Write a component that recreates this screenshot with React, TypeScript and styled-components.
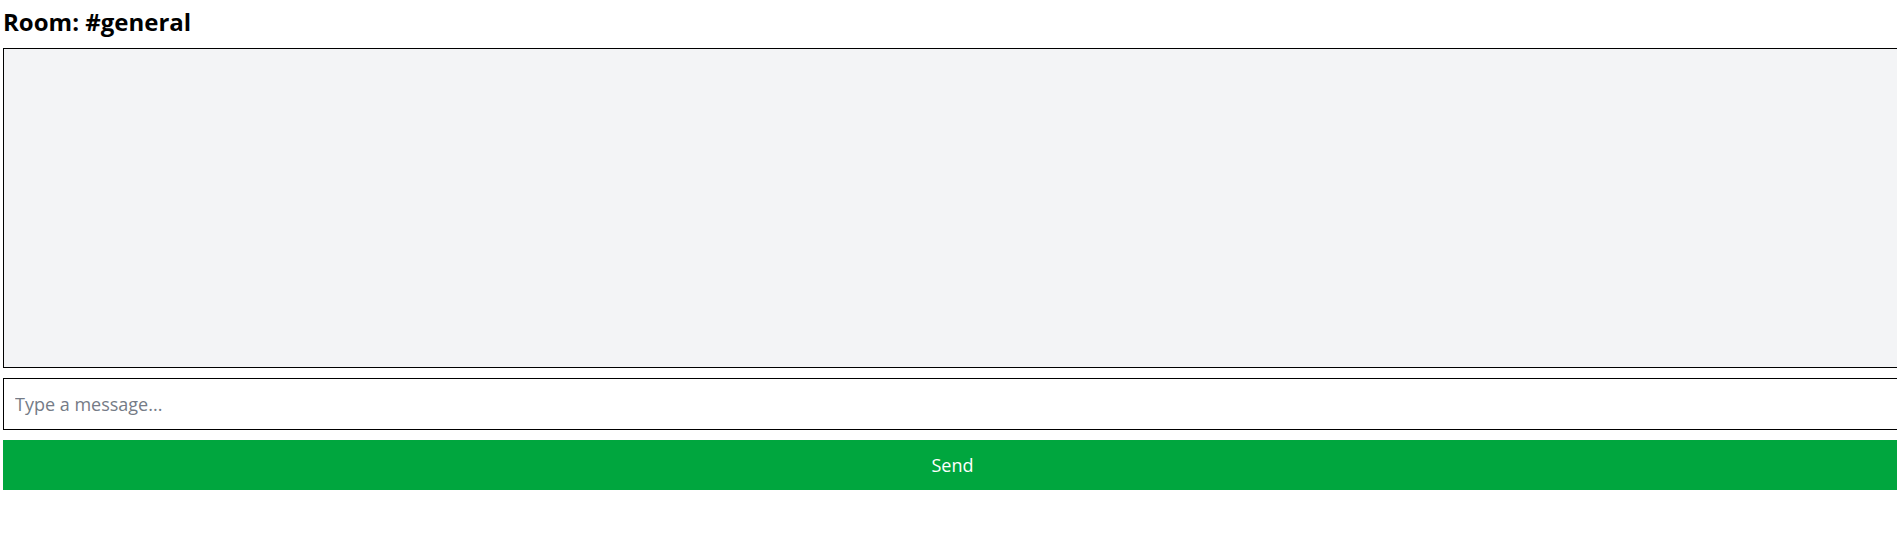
import React from "react";
import styled, { createGlobalStyle } from "styled-components";

const GlobalStyle = createGlobalStyle`
  html, body {
    margin: 0;
    padding: 0;
    overflow: hidden;
    background: #ffffff;
    font-family: "Open Sans", "Noto Sans", "Liberation Sans", sans-serif;
  }
  * { box-sizing: border-box; }
`;

const Page = styled.div`
  display: flex;
  flex-direction: column;
  width: 1902px;
  padding: 6px 0 0 3px;
`;

const Title = styled.h2`
  margin: 0 0 10px 0;
  font-size: 24px;
  line-height: 32px;
  font-weight: 700;
  color: #000;
`;

const Messages = styled.div`
  height: 320px;
  border: 1px solid #000;
  background: #f3f4f6;
  overflow-y: auto;
`;

const Input = styled.input`
  margin-top: 10px;
  height: 52px;
  border: 1px solid #000;
  padding: 0 11px;
  font-family: inherit;
  font-size: 18px;
  color: #111;
  background: #fff;
  outline: none;
  &::placeholder {
    color: #757b86;
  }
`;

const SendButton = styled.button`
  margin-top: 10px;
  height: 50px;
  border: none;
  background: #00a63e;
  color: #ffffff;
  font-family: inherit;
  font-size: 18px;
  cursor: pointer;
`;

export default function App() {
  return (
    <>
      <GlobalStyle />
      <Page>
        <Title>Room: #general</Title>
        <Messages />
        <Input placeholder="Type a message..." />
        <SendButton>Send</SendButton>
      </Page>
    </>
  );
}
